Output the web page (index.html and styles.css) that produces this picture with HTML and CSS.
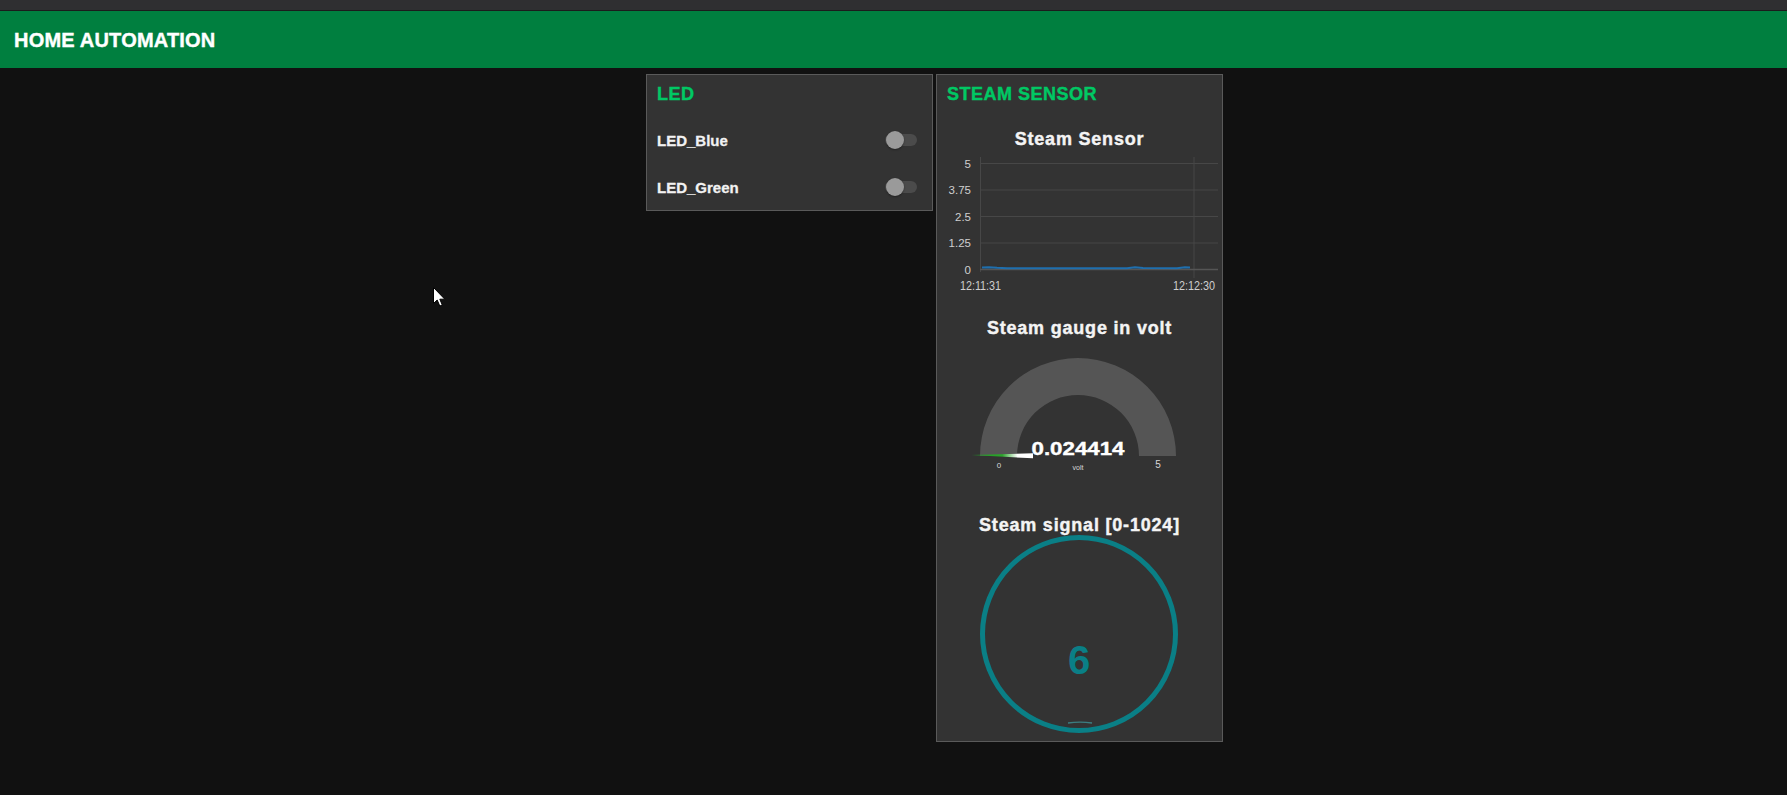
FILE: index.html
```html
<!DOCTYPE html>
<html lang="en">
<head>
<meta charset="utf-8">
<title>Home Automation</title>
<link rel="stylesheet" href="styles.css">
</head>
<body>
<div class="topstrip"></div>
<header class="toolbar">
  <h1 class="toolbar-title">HOME AUTOMATION</h1>
</header>
<main class="dashboard">
  <section class="card">
    <h2 class="card-title">LED</h2>
    <div class="rows">
      <div class="row"><span class="row-label">LED_Blue</span><span class="switch"></span></div>
      <div class="row"><span class="row-label">LED_Green</span><span class="switch"></span></div>
    </div>
  </section>
  <section class="card">
    <h2 class="card-title">STEAM SENSOR</h2>
    <h3 class="widget-title chart-title">Steam Sensor</h3>
    <svg class="chart" width="285" height="145" viewBox="0 0 285 145">
      <g class="grid">
        <line x1="43" y1="13.5" x2="281" y2="13.5"/>
        <line x1="43" y1="40" x2="281" y2="40"/>
        <line x1="43" y1="66.5" x2="281" y2="66.5"/>
        <line x1="43" y1="93" x2="281" y2="93"/>
        <line x1="43.5" y1="7" x2="43.5" y2="122"/>
        <line x1="257" y1="7" x2="257" y2="128"/>
      </g>
      <line class="zero" x1="43" y1="119.5" x2="281" y2="119.5"/>
      <g class="ylab">
        <text x="34" y="17.5">5</text>
        <text x="34" y="44">3.75</text>
        <text x="34" y="70.5">2.5</text>
        <text x="34" y="97">1.25</text>
        <text x="34" y="123.5">0</text>
      </g>
      <g class="xlab">
        <text x="43.5" y="139.5" textLength="41" lengthAdjust="spacingAndGlyphs">12:11:31</text>
        <text x="257" y="139.5" textLength="42" lengthAdjust="spacingAndGlyphs">12:12:30</text>
      </g>
      <path class="series" d="M45,117.6 L52,117.3 L60,117.8 L70,118.2 L190,118.2 L198,117.3 L206,118 L240,118.2 L248,117.2 L253,117.4"/>
    </svg>
    <h3 class="widget-title gauge-title">Steam gauge in volt</h3>
    <svg class="gauge" width="285" height="130" viewBox="0 0 285 130">
      <defs>
        <linearGradient id="needle" x1="0" y1="0" x2="1" y2="0">
          <stop offset="0" stop-color="#1f9a24"/>
          <stop offset="0.5" stop-color="#2aa52a"/>
          <stop offset="0.75" stop-color="#ffffff"/>
        </linearGradient>
      </defs>
      <path class="gauge-arc" d="M43,106 A98,98 0 0 1 239,106 L202,106 A61,61 0 0 0 80,106 Z"/>
      <polygon points="34.5,105 96,103.2 96,108.3" fill="url(#needle)"/>
      <text class="gauge-value" x="141" y="105" textLength="93" lengthAdjust="spacingAndGlyphs">0.024414</text>
      <text class="gauge-min" x="62" y="117.5">0</text>
      <text class="gauge-max" x="221" y="118">5</text>
      <text class="gauge-unit" x="141" y="120">volt</text>
    </svg>
    <h3 class="widget-title signal-title">Steam signal [0-1024]</h3>
    <svg class="donut" width="285" height="207" viewBox="0 0 285 207">
      <circle class="donut-ring" cx="142" cy="100" r="96.5"/>
      <path class="donut-value" d="M131,189 Q143,187.4 155,189"/>
      <text class="donut-text" x="142" y="140">6</text>
    </svg>
  </section>
</main>
<svg class="cursor" width="14" height="21" viewBox="0 0 14 21">
  <path d="M0.5,0.5 L0.5,16.5 L4.2,13 L6.8,19 L9.3,18 L6.8,12.2 L11.8,12.2 Z" fill="#fff" stroke="#000" stroke-width="1"/>
</svg>
</body>
</html>
```

FILE: styles.css
```css
html, body {
  margin: 0;
  padding: 0;
}

body {
  background: #111111;
  font-family: "Liberation Sans", Arial, sans-serif;
  color: #eeeeee;
  min-height: 795px;
  position: relative;
  overflow: hidden;
}

.topstrip {
  height: 10px;
  background: #2f2f31;
  border-bottom: 1px solid #1b1b1c;
}

.toolbar {
  height: 57px;
  background: #007f3f;
  display: flex;
  align-items: center;
  padding-left: 14px;
}

.toolbar-title {
  margin: 0;
  font-size: 20px;
  font-weight: bold;
  color: #ffffff;
  line-height: 20px;
  letter-spacing: 0.2px;
  -webkit-text-stroke: 0.4px #ffffff;
}

.dashboard {
  display: flex;
  align-items: flex-start;
  gap: 3px;
  padding: 6px 0 0 646px;
}

.card {
  width: 287px;
  box-sizing: border-box;
  background: #333333;
  border: 1px solid #5a5a5a;
}

.card-title {
  margin: 0;
  padding: 10px 10px 13px 10px;
  font-size: 18px;
  line-height: 18px;
  font-weight: bold;
  letter-spacing: 0.5px;
  color: #00c864;
  -webkit-text-stroke: 0.4px #00c864;
}

.row {
  height: 48px;
  display: flex;
  align-items: center;
  justify-content: space-between;
  padding: 0 15px 0 10px;
}

.row:last-child {
  height: 46px;
}

.row-label {
  font-size: 15px;
  font-weight: bold;
  color: #f2f2f2;
  -webkit-text-stroke: 0.3px #f2f2f2;
}

.switch {
  position: relative;
  width: 32px;
  height: 12px;
  border-radius: 6px;
  background: #4b4b4b;
}

.switch::before {
  content: "";
  position: absolute;
  left: 1px;
  top: -3px;
  width: 18px;
  height: 18px;
  border-radius: 50%;
  background: #9a9a9a;
  box-shadow: 0 1px 2px rgba(0, 0, 0, 0.35);
}

.widget-title {
  margin: 0;
  font-size: 18px;
  line-height: 18px;
  font-weight: bold;
  letter-spacing: 0.8px;
  text-align: center;
  color: #f4f4f4;
  -webkit-text-stroke: 0.4px #f4f4f4;
}

.chart-title {
  margin-top: 14px;
}

.gauge-title {
  margin-top: 24px;
}

.signal-title {
  margin-top: 36px;
}

.chart,
.gauge,
.donut {
  display: block;
}

.chart {
  margin-top: 2px;
}

.gauge {
  margin-top: 13px;
}

.grid line {
  stroke: #474747;
  stroke-width: 1;
}

.zero {
  stroke: #555555;
  stroke-width: 1.5;
}

.ylab text {
  font-family: "Liberation Sans", Arial, sans-serif;
  font-size: 11.5px;
  fill: #cfcfcf;
  text-anchor: end;
}

.xlab text {
  font-family: "Liberation Sans", Arial, sans-serif;
  font-size: 12px;
  fill: #cfcfcf;
  text-anchor: middle;
}

.series {
  fill: none;
  stroke: #1f6fae;
  stroke-width: 2;
  stroke-linejoin: round;
}

.gauge-arc {
  fill: #555555;
}

.gauge-value {
  font-family: "Liberation Sans", Arial, sans-serif;
  font-size: 19px;
  font-weight: bold;
  fill: #ffffff;
  stroke: #ffffff;
  stroke-width: 0.4px;
  text-anchor: middle;
}

.gauge-min,
.gauge-max,
.gauge-unit {
  font-family: "Liberation Sans", Arial, sans-serif;
  fill: #d8d8d8;
  text-anchor: middle;
}

.gauge-min {
  font-size: 8px;
}

.gauge-max {
  font-size: 10px;
}

.gauge-unit {
  font-size: 7px;
}

.donut-ring {
  fill: none;
  stroke: #0a7f86;
  stroke-width: 5;
}

.donut-value {
  fill: none;
  stroke: #3f9ea4;
  stroke-width: 1.3;
  opacity: 0.7;
}

.donut-text {
  font-family: "Liberation Sans", Arial, sans-serif;
  font-size: 40px;
  font-weight: bold;
  fill: #0a7f86;
  text-anchor: middle;
}

.cursor {
  position: absolute;
  left: 433px;
  top: 287px;
}
```
